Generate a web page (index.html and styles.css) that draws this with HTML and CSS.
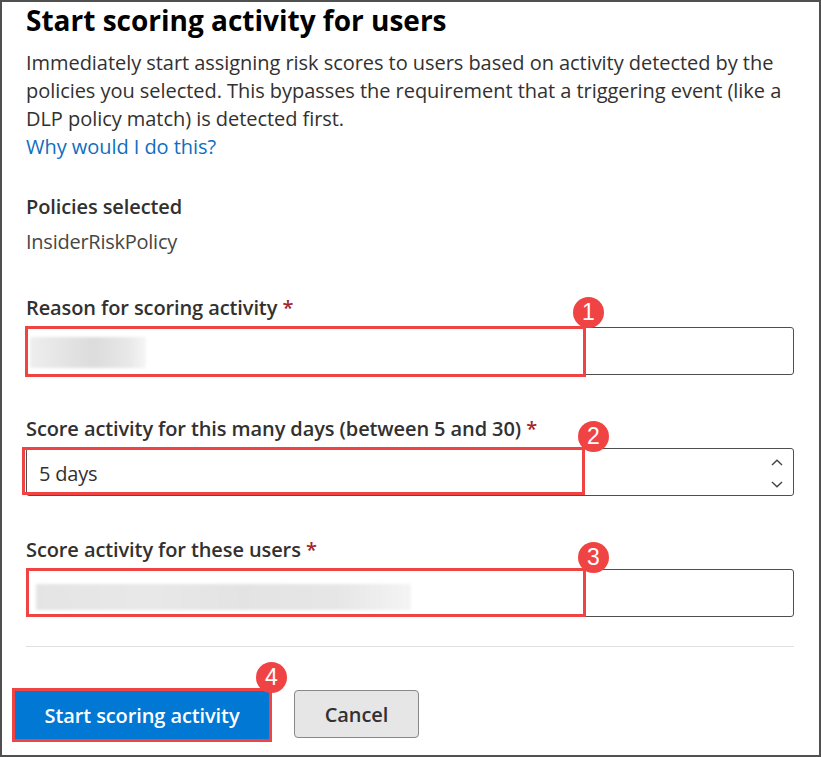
FILE: index.html
```html
<!DOCTYPE html>
<html lang="en">
<head>
<meta charset="utf-8">
<title>Start scoring activity for users</title>
<link rel="stylesheet" href="styles.css">
</head>
<body>
<div class="frame">
  <div class="content">
    <h1 class="title">Start scoring activity for users</h1>
    <p class="desc">Immediately start assigning risk scores to users based on activity detected by the policies you selected. This bypasses the requirement that a triggering event (like a DLP policy match) is detected first.<br><a class="link" href="#">Why would I do this?</a></p>

    <div class="policies">
      <div class="label">Policies selected</div>
      <div class="value">InsiderRiskPolicy</div>
    </div>

    <div class="field field-first">
      <div class="label">Reason for scoring activity <span class="req">*</span></div>
      <div class="input-wrap">
        <div class="input">
          <div class="blur blur-1"></div>
        </div>
        <div class="mark mark-1"></div>
        <div class="badge badge-1">1</div>
      </div>
    </div>

    <div class="field">
      <div class="label">Score activity for this many days (between 5 and 30) <span class="req">*</span></div>
      <div class="input-wrap">
        <div class="input input-spin">
          <span class="input-text">5 days</span>
          <div class="spin">
            <svg width="12" height="7" viewBox="0 0 12 7"><path d="M1 6 L6 1.2 L11 6" fill="none" stroke="#444" stroke-width="1.4"/></svg>
            <svg width="12" height="7" viewBox="0 0 12 7"><path d="M1 1 L6 5.8 L11 1" fill="none" stroke="#444" stroke-width="1.4"/></svg>
          </div>
        </div>
        <div class="mark mark-2"></div>
        <div class="badge badge-2">2</div>
      </div>
    </div>

    <div class="field">
      <div class="label">Score activity for these users <span class="req">*</span></div>
      <div class="input-wrap">
        <div class="input">
          <div class="blur blur-3"></div>
        </div>
        <div class="mark mark-3"></div>
        <div class="badge badge-3">3</div>
      </div>
    </div>

    <div class="divider"></div>
  </div>

  <div class="footer">
    <div class="btn-wrap">
      <button class="btn btn-primary">Start scoring activity</button>
      <div class="badge badge-4">4</div>
    </div>
    <button class="btn btn-cancel">Cancel</button>
  </div>
</div>
</body>
</html>
```

FILE: styles.css
```css
* { box-sizing: border-box; }

html, body {
  margin: 0;
  padding: 0;
  background: #ffffff;
}

body {
  font-family: "Open Sans", "Noto Sans", sans-serif;
  color: #323130;
}

.frame {
  width: 821px;
  height: 757px;
  border: 2px solid #505050;
  background: #ffffff;
  overflow: hidden;
}

.content {
  padding: 0 25px 0 24px;
}

.title {
  margin: 0;
  font-size: 28px;
  line-height: 36px;
  font-weight: 700;
  color: #000000;
  letter-spacing: 0;
}

.desc {
  margin: 11px 0 0 0;
  font-size: 20px;
  line-height: 28px;
  color: #323130;
  letter-spacing: -0.05px;
}

.link {
  color: #106ebe;
  text-decoration: none;
}

.policies {
  margin-top: 32px;
}

.label {
  font-size: 20px;
  line-height: 28px;
  font-weight: 600;
  color: #323130;
  letter-spacing: -0.1px;
}

.req {
  color: #a4262c;
}

.value {
  margin-top: 7px;
  font-size: 20px;
  line-height: 28px;
  color: #484644;
  letter-spacing: -0.25px;
}

.field {
  margin-top: 40px;
}

.field-first {
  margin-top: 38px;
}

.input-wrap {
  position: relative;
  margin-top: 5px;
}

.input {
  height: 48px;
  border: 1px solid #4f4f4f;
  border-radius: 3px;
  background: #ffffff;
  display: flex;
  align-items: center;
}

.input-spin {
  justify-content: space-between;
  padding: 0 10px 0 12px;
}

.input-text {
  font-size: 20px;
  color: #323130;
  letter-spacing: -0.2px;
  margin-top: 2px;
}

.spin {
  display: flex;
  flex-direction: column;
  gap: 15px;
  margin-top: 2px;
}

.spin svg {
  display: block;
}

.blur {
  height: 31px;
  background: linear-gradient(90deg, #eeeeee 0%, #e2e2e2 35%, #dcdcdc 55%, #e8e8e8 85%, #f6f6f6 100%);
  filter: blur(1.5px);
}

.blur-1 {
  width: 116px;
  margin-left: 3px;
  margin-top: 2px;
}

.blur-3 {
  width: 375px;
  height: 26px;
  margin-left: 9px;
  margin-top: 8px;
  background: linear-gradient(90deg, #e4e4e4 0%, #e8e8e8 30%, #e3e3e3 55%, #e6e6e6 80%, #f4f4f4 100%);
}

.mark {
  position: absolute;
  border: 3px solid #f04444;
  pointer-events: none;
}

.mark-1 { left: -1px; top: -1px; width: 561px; height: 51px; }
.mark-2 { left: -4px; top: -1px; width: 563px; height: 48px; }
.mark-3 { left: 0; top: -1px; width: 560px; height: 49px; }

.badge {
  position: absolute;
  width: 31px;
  height: 31px;
  border-radius: 50%;
  background: #f04444;
  color: #ffffff;
  font-family: "Liberation Sans", Arial, sans-serif;
  font-size: 23px;
  line-height: 31px;
  text-align: center;
}

.badge-1 { left: 547px; top: -30px; }
.badge-2 { left: 552px; top: -27px; }
.badge-3 { left: 552px; top: -27px; }
.badge-4 { left: 241px; top: -29px; }

.divider {
  margin-top: 29px;
  height: 1px;
  background: #e1dfdd;
}

.footer {
  display: flex;
  align-items: flex-start;
  gap: 25px;
  padding-left: 13px;
  margin-top: 43px;
}

.btn-wrap {
  position: relative;
  margin-top: 1px;
}

.btn {
  font-family: "Open Sans", "Noto Sans", sans-serif;
  font-size: 20px;
  font-weight: 600;
  letter-spacing: -0.1px;
  cursor: pointer;
}

.btn-primary {
  display: block;
  width: 254px;
  height: 48px;
  background: #0078d4;
  color: #ffffff;
  border: none;
  border-radius: 0;
  box-shadow: 0 0 0 3px #f04444;
}

.btn-cancel {
  width: 125px;
  height: 48px;
  background: #e6e6e6;
  color: #323130;
  border: 1px solid #8a8886;
  border-radius: 4px;
}
```
